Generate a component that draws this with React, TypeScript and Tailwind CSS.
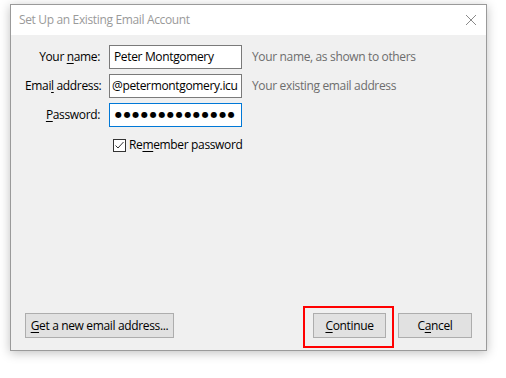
import React from "react";

const font = { fontFamily: '"Open Sans", "Noto Sans", sans-serif' };

function U({ children }: { children: React.ReactNode }) {
  return <span className="underline underline-offset-2 decoration-1">{children}</span>;
}

export default function App() {
  return (
    <div className="w-[506px] h-[378px] bg-white overflow-hidden text-[12px] tracking-[-0.35px] text-black" style={font}>
      <div className="ml-[10px] mt-[4px] w-[477px] h-[347px] border border-[#9a9a9a] shadow-[0_2px_10px_rgba(0,0,0,0.25)] flex flex-col bg-[#f0f0f0]">
        <div className="h-[30px] bg-white flex items-center justify-between pl-[8px] pr-[9px]">
          <span className="text-[#9a9a9a] text-[12px]">Set Up an Existing Email Account</span>
          <svg width="12" height="12" viewBox="0 0 12 12" className="mt-[-1px]">
            <path d="M1 1 L11 11 M11 1 L1 11" stroke="#8a8a8a" strokeWidth="1" fill="none" />
          </svg>
        </div>
        <div className="flex-1 flex flex-col pl-[14px] pr-[14px] pt-[10px] pb-[12px]">
          <div className="grid grid-cols-[75px_133px_1fr] gap-y-[5px] items-center">
            <div className="text-right whitespace-nowrap">Your <U>n</U>ame:</div>
            <div className="ml-[9px] w-[133px] h-[24px] border border-[#7a7a7a] bg-white flex items-center px-[4px] whitespace-nowrap overflow-hidden">Peter Montgomery</div>
            <div className="ml-[19px] text-[#6d6d6d] whitespace-nowrap">Your name, as shown to others</div>

            <div className="text-right whitespace-nowrap">Emai<U>l</U> address:</div>
            <div className="ml-[9px] w-[133px] h-[24px] border border-[#7a7a7a] bg-white flex items-center px-[2px] whitespace-nowrap overflow-hidden">@petermontgomery.icu</div>
            <div className="ml-[19px] text-[#6d6d6d] whitespace-nowrap">Your existing email address</div>

            <div className="text-right whitespace-nowrap"><U>P</U>assword:</div>
            <div className="ml-[9px] w-[133px] h-[24px] border border-[#0078d7] bg-white flex items-center px-[5px] whitespace-nowrap overflow-hidden text-[8px] tracking-[1.7px]" style={{ fontFamily: '"DejaVu Sans", sans-serif' }}>●●●●●●●●●●●●●●</div>
            <div />
          </div>
          <div className="flex items-center ml-[88px] mt-[9px] gap-[3px]">
            <div className="w-[13px] h-[13px] border border-[#333] bg-white flex items-center justify-center">
              <svg width="11" height="11" viewBox="0 0 11 11">
                <path d="M1.5 5.5 L4 8 L9.5 2" stroke="#333" strokeWidth="1" fill="none" />
              </svg>
            </div>
            <span>Re<U>m</U>ember password</span>
          </div>
          <div className="flex-1" />
          <div className="flex items-center">
            <button className="h-[25px] w-[149px] border border-[#adadad] bg-[#e1e1e1] flex items-center justify-center whitespace-nowrap"><span><U>G</U>et a new email address...</span></button>
            <div className="flex-1" />
            <div className="relative">
              <button className="h-[25px] w-[73px] border border-[#adadad] bg-[#e1e1e1] flex items-center justify-center"><span><U>C</U>ontinue</span></button>
              <div className="absolute left-[-10px] top-[-7px] w-[91px] h-[42px] border-2 border-[#ff0000] pointer-events-none" />
            </div>
            <button className="ml-[12px] h-[25px] w-[74px] border border-[#adadad] bg-[#e1e1e1] flex items-center justify-center"><span>C<U>a</U>ncel</span></button>
          </div>
        </div>
      </div>
    </div>
  );
}
